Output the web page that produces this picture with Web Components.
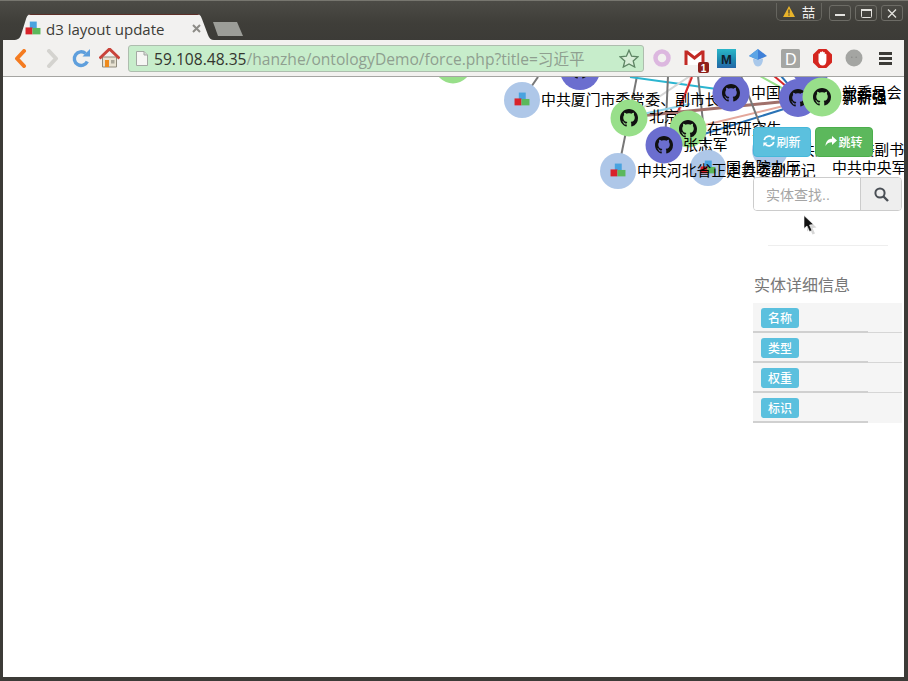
<!DOCTYPE html>
<html>
<head>
<meta charset="utf-8">
<title>d3 layout update</title>
<style>
  html, body { margin: 0; padding: 0; background: #3c3b37; overflow: hidden; }
</style>
</head>
<body>
<browser-window>
  <graph-canvas></graph-canvas>
  <side-panel></side-panel>
  <mouse-cursor></mouse-cursor>
</browser-window>

<script>
const CUBES = `
  <rect x="4.5" y="0.5" width="6.5" height="6.5" fill="#4aa3df"/>
  <rect x="0.5" y="6" width="6.5" height="6.5" fill="#d8232a"/>
  <rect x="7" y="6.5" width="7.5" height="6" fill="#5cb85c"/>`;

class WindowControls extends HTMLElement {
  constructor() {
    super();
    this.attachShadow({ mode: 'open' });
    this.shadowRoot.innerHTML = `
      <style>
        :host { display: flex; align-items: flex-start; padding: 2px 5px 0 0; }
        .user {
          width: 46px; height: 18px; box-sizing: border-box; margin-right: 3px;
          border: 1px solid #66655f; border-top: 0; border-radius: 0 0 5px 5px;
          display: flex; align-items: center; justify-content: center; gap: 7px;
          color: #f2f1ef; font: 13px "Noto Sans CJK SC", sans-serif;
        }
        .btn {
          width: 22px; height: 16px; box-sizing: border-box; margin-left: 4px; margin-top: 2px;
          border: 1px solid #6d6c66; border-radius: 3px;
          display: flex; align-items: center; justify-content: center;
        }
      </style>
      <div class="user">
        <svg width="12" height="11" viewBox="0 0 12 11"><path d="M6 0L12 11H0z" fill="#e8b32a"/><rect x="5.4" y="3.5" width="1.2" height="4" fill="#3c3b37"/><rect x="5.4" y="8.4" width="1.2" height="1.2" fill="#3c3b37"/></svg>
        <span>喆</span>
      </div>
      <div class="btn"><svg width="10" height="8"><rect x="0" y="5" width="10" height="2" fill="#e4e3df"/></svg></div>
      <div class="btn"><svg width="11" height="9"><rect x="0.5" y="0.5" width="10" height="8" rx="1" fill="none" stroke="#e4e3df"/><rect x="0" y="0" width="11" height="2" fill="#e4e3df"/></svg></div>
      <div class="btn"><svg width="10" height="9"><path d="M1 0.5L9 8.5M9 0.5L1 8.5" stroke="#e4e3df" stroke-width="1.3"/></svg></div>`;
  }
}
customElements.define('window-controls', WindowControls);

class BrowserTab extends HTMLElement {
  constructor() {
    super();
    this.attachShadow({ mode: 'open' });
    this.shadowRoot.innerHTML = `
      <style>
        :host {
          display: flex; align-items: center; width: 201px; height: 26px; box-sizing: border-box;
          padding: 2px 0 0 12px; background: #f2f1f0; color: #3c3b37;
          border-top: 1px solid #5c2e28;
          clip-path: path('M0 26C5 26 7 24 8 21L13 5C14 2 15 0 19 0L183 0C187 0 188 2 189 5L195 21C196 24 198 26 201 26Z');
          font: 15px "Open Sans", sans-serif;
        }
        svg.fav { flex: none; margin-right: 5px; }
        .title { flex: 1; white-space: nowrap; }
        svg.close { flex: none; margin-right: 13px; }
      </style>
      <svg class="fav" width="16" height="15" viewBox="0 0 15 14">${CUBES}</svg>
      <span class="title">d3 layout update</span>
      <svg class="close" width="9" height="9"><path d="M1 1L8 8M8 1L1 8" stroke="#8d8c88" stroke-width="2"/></svg>`;
  }
}
customElements.define('browser-tab', BrowserTab);

class NewTabButton extends HTMLElement {
  constructor() {
    super();
    this.attachShadow({ mode: 'open' });
    this.shadowRoot.innerHTML = `
      <style>
        :host {
          display: block; width: 30px; height: 14px; margin: 0 0 4px -1px; background: #9c9d98;
          clip-path: polygon(0 0, 24px 0, 30px 14px, 5px 14px);
        }
      </style>`;
  }
}
customElements.define('new-tab-button', NewTabButton);

class TitleBar extends HTMLElement {
  constructor() {
    super();
    this.attachShadow({ mode: 'open' });
    this.shadowRoot.innerHTML = `
      <style>
        :host {
          display: flex; justify-content: space-between; align-items: flex-start; height: 40px; box-sizing: border-box;
          border-top: 1px solid #77766f;
          background: linear-gradient(#4c4b46, #3f3e39 22px, #3c3b37);
        }
        .tabs { display: flex; align-items: flex-end; height: 39px; padding-left: 13px; }
      </style>
      <div class="tabs"><browser-tab></browser-tab><new-tab-button></new-tab-button></div>
      <window-controls></window-controls>`;
  }
}
customElements.define('title-bar', TitleBar);

class OmniBox extends HTMLElement {
  constructor() {
    super();
    this.attachShadow({ mode: 'open' });
    this.shadowRoot.innerHTML = `
      <style>
        :host {
          display: flex; align-items: center; flex: none; width: 516px; height: 27px; box-sizing: border-box;
          margin-left: 4px; padding: 0 4px 0 7px; background: #c7edcb;
          border: 1px solid #aebdae; border-radius: 3px; white-space: nowrap;
          font: 15.6px "Open Sans", "Noto Sans CJK SC", sans-serif; color: #8f9f90;
        }
        svg.doc { flex: none; margin-right: 6px; }
        .host { color: #34352f; font-weight: 500; }
        .url { flex: 1; overflow: hidden; }
      </style>
      <svg class="doc" width="12" height="15" viewBox="0 0 12 15"><path d="M0.5 0.5H8L11.5 4V14.5H0.5Z" fill="#f6f6f4" stroke="#a3a9a3"/><path d="M8 0.5V4H11.5" fill="#d8d8d6" stroke="#a3a9a3"/></svg>
      <span class="url"><span class="host">59.108.48.35</span>/hanzhe/ontologyDemo/force.php?title=习近平</span>
      <svg width="20" height="19" viewBox="0 0 20 19"><path d="M10 1.2L12.6 7.2L19 7.8L14.2 12L15.7 18L10 14.9L4.3 18L5.8 12L1 7.8L7.4 7.2Z" fill="#d9eed9" stroke="#5d8463" stroke-width="1.3"/></svg>`;
  }
}
customElements.define('omni-box', OmniBox);

class ToolSlot extends HTMLElement {
  constructor() {
    super();
    this.attachShadow({ mode: 'open' });
    this.shadowRoot.innerHTML = `
      <style>
        :host { display: flex; align-items: center; justify-content: center; flex: none; height: 36px; width: var(--w, 32px); }
      </style>
      <slot></slot>`;
  }
}
customElements.define('tool-slot', ToolSlot);

class ToolBar extends HTMLElement {
  constructor() {
    super();
    this.attachShadow({ mode: 'open' });
    this.shadowRoot.innerHTML = `
      <style>
        :host {
          display: flex; align-items: center; height: 36px; padding: 0 2px 0 1px;
          background: #f2f1ef; border-bottom: 1px solid #a5a5a2;
        }
        .ext { margin-left: 2px; display: flex; }
      </style>
      <tool-slot><svg width="13" height="19" viewBox="0 0 13 19"><path d="M10 2L3 9.5L10 17" fill="none" stroke="#f47b20" stroke-width="4" stroke-linecap="round" stroke-linejoin="round"/></svg></tool-slot>
      <tool-slot><svg width="13" height="19" viewBox="0 0 13 19"><path d="M3 2L10 9.5L3 17" fill="none" stroke="#d4d3cf" stroke-width="4" stroke-linecap="round" stroke-linejoin="round"/></svg></tool-slot>
      <tool-slot style="--w:26px"><svg width="19" height="19" viewBox="0 0 19 19"><path d="M15.3 12.5A6.8 6.8 0 1 1 13.6 4.5" fill="none" stroke="#5f9fdc" stroke-width="3.4"/><path d="M10.5 7.5H18V0Z" fill="#5f9fdc"/></svg></tool-slot>
      <tool-slot style="--w:30px"><svg width="21" height="20" viewBox="0 0 21 20"><path d="M3.5 9H17.5V19H3.5Z" fill="#e8e2d2" stroke="#8f8a7c"/><rect x="6" y="12" width="4" height="7" fill="#ee8a1d"/><rect x="12" y="12" width="3.5" height="3.5" fill="#a9a699"/><path d="M0.5 10.5L10.5 1L20.5 10.5" fill="none" stroke="#c9433a" stroke-width="3"/></svg></tool-slot>
      <omni-box></omni-box>
      <div class="ext">
        <tool-slot><svg width="18" height="18"><circle cx="9" cy="9" r="6.5" fill="none" stroke="#dcb7df" stroke-width="4.5"/></svg></tool-slot>
        <tool-slot><svg width="30" height="30" viewBox="0 0 30 30">
          <rect x="6" y="8" width="19" height="14" fill="#fff"/>
          <path d="M7 22V9H8L15.5 15L23 9H24V22" fill="none" stroke="#c22a25" stroke-width="3"/>
          <rect x="19" y="19" width="11" height="11" rx="2" fill="#8d1f1b"/>
          <text x="24.5" y="28.5" text-anchor="middle" font-family="Liberation Sans" font-weight="700" font-size="10" fill="#fff">1</text>
        </svg></tool-slot>
        <tool-slot><svg width="19" height="19" viewBox="0 0 19 19">
          <defs><linearGradient id="mg" x1="0" y1="0" x2="0" y2="1"><stop offset="0" stop-color="#2bb6c9"/><stop offset=".55" stop-color="#1f8ab0"/><stop offset="1" stop-color="#2467a8"/></linearGradient></defs>
          <rect width="19" height="19" fill="url(#mg)"/>
          <text x="9.5" y="15" text-anchor="middle" font-family="Liberation Sans" font-weight="700" font-size="13" fill="#10202e">M</text>
        </svg></tool-slot>
        <tool-slot><svg width="18" height="18" viewBox="0 0 18 18"><path d="M9 0L18 7L9 11L0 7Z" fill="#3f80d8"/><path d="M0 7L9 0V11Z" fill="#5da5e5"/><path d="M4 9.5L9 11L14 9.5C14 14 12 17.5 9 17.5C6 17.5 4 14 4 9.5Z" fill="#a9c8ea"/></svg></tool-slot>
        <tool-slot><svg width="19" height="19" viewBox="0 0 19 19"><rect width="19" height="19" rx="1.5" fill="#a5a6a3"/><text x="9.8" y="15.5" text-anchor="middle" font-family="Liberation Sans" font-size="16" fill="#fff">D</text></svg></tool-slot>
        <tool-slot><svg width="19" height="19" viewBox="0 0 19 19"><path d="M5.6 0H13.4L19 5.6V13.4L13.4 19H5.6L0 13.4V5.6Z" fill="#d5261f"/><path d="M5.5 8V5C5.5 4 7 4 7 5V3.5C7 2.5 8.6 2.5 8.6 3.5V3C8.6 2 10.2 2 10.2 3V3.6C10.2 2.7 11.8 2.7 11.8 3.6V5.4C11.8 4.6 13.4 4.6 13.4 5.4V11.5C13.4 14.5 12 16.5 9.5 16.5C7.5 16.5 6.5 15.5 5.5 13Z" fill="#fff"/></svg></tool-slot>
        <tool-slot><svg width="18" height="18"><circle cx="9" cy="9" r="8.5" fill="#a4a5a2"/><circle cx="6.8" cy="8.2" r=".8" fill="#8a8b88"/><circle cx="11.2" cy="8.2" r=".8" fill="#8a8b88"/></svg></tool-slot>
        <tool-slot><svg width="14" height="13"><rect width="13" height="3" y="0" fill="#3c3b37"/><rect width="13" height="3" y="5" fill="#3c3b37"/><rect width="13" height="3" y="10" fill="#3c3b37"/></svg></tool-slot>
      </div>`;
  }
}
customElements.define('tool-bar', ToolBar);

class BrowserWindow extends HTMLElement {
  constructor() {
    super();
    this.attachShadow({ mode: 'open' });
    this.shadowRoot.innerHTML = `
      <style>
        :host {
          display: flex; flex-direction: column; width: 908px; height: 681px; box-sizing: border-box;
          background: #3c3b37;
        }
        .body { display: flex; flex-direction: column; flex: 1; padding: 0 4px 4px 3px; min-height: 0; }
        .page { position: relative; flex: 1; background: #fff; overflow: hidden; }
      </style>
      <title-bar></title-bar>
      <div class="body">
        <tool-bar></tool-bar>
        <div class="page"><slot></slot></div>
      </div>`;
  }
}
customElements.define('browser-window', BrowserWindow);

class GraphCanvas extends HTMLElement {
  constructor() {
    super();
    this.attachShadow({ mode: 'open' });
    this.links = [
      [538, 77, 522, 100, '#777', 2],
      [637, 76, 629, 117, '#777', 2],
      [618, 171, 629, 117, '#777', 2],
      [630, 77, 731, 91, '#2cb5d0', 2],
      [690, 76, 629, 117, '#d6d6d6', 2],
      [668, 76, 665, 144, '#777', 2],
      [698, 76, 708, 168, '#777', 2],
      [691, 76, 679, 113, '#f7b6b2', 2],
      [692, 77, 677, 114, '#d62728', 2],
      [629, 117, 800, 100, '#a0706a', 3],
      [688, 129, 800, 102, '#e4a89c', 2],
      [688, 139, 800, 104, '#2a72b5', 2],
      [629, 117, 690, 104, '#8fd3ea', 2],
      [741, 76, 770, 150, '#777', 2],
      [760, 76, 800, 98, '#98df8a', 2],
      [774, 76, 800, 98, '#d62728', 2],
      [781, 76, 800, 98, '#2a72b5', 2]
    ];
    // type: a = cubes (light blue), g = green, p = purple
    this.nodes = [
      [453, 65, 18.5, 'g', '', 0, 0],
      [580, 70, 20, 'p', '', 0, 0],
      [522, 100, 18, 'a', '中共厦门市委常委、副市长', 541, 105],
      [731, 93, 18.5, 'p', '中国', 751, 98],
      [629, 118, 18.5, 'g', '北京', 649, 122],
      [770, 150, 18, 'a', '中共天津市委副书记', 785, 155],
      [688, 129, 18.5, 'g', '在职研究生', 707, 134],
      [664, 145, 18.5, 'p', '张志军', 683, 150],
      [708, 168, 18, 'a', '国务院办厅', 726, 173],
      [618, 171, 18, 'a', '中共河北省正定县委副书记', 637, 176],
      [811, 66, 20, 'p', '常委员会', 842, 98],
      [798, 98, 19, 'p', '郭新强', 842, 102],
      [822, 97, 19.5, 'g', '郝新强', 842, 103],
      [0, 0, 0, '', '中共中央军委', 832, 173]
    ];
  }

  connectedCallback() {
    const fills = { a: '#aec7e8', g: '#98df8a', p: '#6b6ecf' };
    const lines = this.links.map(l =>
      `<line x1="${l[0]}" y1="${l[1]}" x2="${l[2]}" y2="${l[3]}" stroke="${l[4]}" stroke-width="${l[5]}"/>`).join('');
    const nodes = this.nodes.map(n => {
      let out = '';
      if (n[2]) {
        out += `<circle cx="${n[0]}" cy="${n[1]}" r="${n[2]}" fill="${fills[n[3]]}"/>`;
        if (n[3] === 'a') out += `<use href="#cubes" x="${n[0] - 8}" y="${n[1] - 8}" width="16" height="15"/>`;
        else out += `<use href="#cat" x="${n[0] - 9}" y="${n[1] - 9}" width="18" height="18"/>`;
      }
      if (n[4]) out += `<text x="${n[5]}" y="${n[6]}">${n[4]}</text>`;
      return out;
    }).join('');
    this.shadowRoot.innerHTML = `
      <style>
        :host { display: block; position: absolute; inset: 0; }
        svg.g { display: block; }
        text { font: 14.9px "Liberation Sans", "Noto Sans CJK SC", sans-serif; fill: #000; }
      </style>
      <svg class="g" width="901" height="600" viewBox="3 77 901 600">
        <defs>
          <symbol id="cubes" viewBox="0 0 15 14">${CUBES}</symbol>
          <symbol id="cat" viewBox="0 0 16 16"><path fill="#111" d="M8 0C3.58 0 0 3.58 0 8c0 3.54 2.29 6.53 5.47 7.59.4.07.55-.17.55-.38 0-.19-.01-.82-.01-1.49-2.01.37-2.53-.49-2.69-.94-.09-.23-.48-.94-.82-1.13-.28-.15-.68-.52-.01-.53.63-.01 1.08.58 1.23.82.72 1.21 1.87.87 2.33.66.07-.52.28-.87.51-1.07-1.78-.2-3.64-.89-3.64-3.95 0-.87.31-1.59.82-2.15-.08-.2-.36-1.02.08-2.12 0 0 .67-.21 2.2.82.64-.18 1.32-.27 2-.27.68 0 1.36.09 2 .27 1.53-1.04 2.2-.82 2.2-.82.44 1.1.16 1.92.08 2.12.51.56.82 1.27.82 2.15 0 3.07-1.87 3.75-3.65 3.95.29.25.54.73.54 1.48 0 1.07-.01 1.93-.01 2.2 0 .21.15.46.55.38A8.013 8.013 0 0016 8c0-4.42-3.58-8-8-8z"/></symbol>
        </defs>
        ${lines}${nodes}
      </svg>`;
  }
}
customElements.define('graph-canvas', GraphCanvas);

class ActionButton extends HTMLElement {
  constructor() {
    super();
    this.attachShadow({ mode: 'open' });
    this.shadowRoot.innerHTML = `
      <style>
        :host {
          display: flex; align-items: center; justify-content: center; width: 58px; height: 30px; box-sizing: border-box;
          padding-bottom: 2px;
          background: var(--bg); border: 1px solid var(--bd); border-radius: 4px;
          color: #fff; font: 500 12px "Liberation Sans", "Noto Sans CJK SC", sans-serif;
        }
      </style>
      <slot></slot>`;
  }
}
customElements.define('action-button', ActionButton);

class DetailRow extends HTMLElement {
  constructor() {
    super();
    this.attachShadow({ mode: 'open' });
    this.shadowRoot.innerHTML = `
      <style>
        :host {
          display: block; height: 30px; box-sizing: border-box; padding: 5px 0 0 8px;
          background: #f5f5f5; position: relative;
          background-image: linear-gradient(#d6d6d6, #d6d6d6);
          background-repeat: no-repeat; background-size: 100% 1px; background-position: 0 29px;
        }
        :host(:last-child) { background-image: none; }
        .pill {
          display: flex; align-items: center; justify-content: center; width: 38px; height: 20px;
          box-sizing: border-box; padding-bottom: 2px;
          background: #5bc0de; border-radius: 3px;
          color: #fff; font: 500 12px "Liberation Sans", "Noto Sans CJK SC", sans-serif;
        }
        .rule { position: absolute; left: 0; top: 28px; width: 115px; height: 2px; background: #d0d0d0; }
      </style>
      <div class="pill"><slot></slot></div>
      <div class="rule"></div>`;
  }
}
customElements.define('detail-row', DetailRow);

class SidePanel extends HTMLElement {
  constructor() {
    super();
    this.attachShadow({ mode: 'open' });
    this.shadowRoot.innerHTML = `
      <style>
        :host {
          display: block; position: absolute; left: 750px; top: 50px; width: 149px;
          font-family: "Liberation Sans", "Noto Sans CJK SC", sans-serif;
        }
        .actions { display: flex; gap: 4px; }
        .info { --bg: #5bc0de; --bd: #46b8da; }
        .go { --bg: #5cb85c; --bd: #4cae4c; }
        svg.ico { margin-right: 1px; }
        .search {
          display: flex; height: 34px; margin-top: 20px; box-sizing: border-box;
          border: 1px solid #ccc; border-radius: 4px; overflow: hidden;
        }
        .input { flex: 1; display: flex; align-items: center; padding-left: 12px; background: #fff; color: #a5a5a5; font-size: 14px; }
        .addon { width: 40px; display: flex; align-items: center; justify-content: center; background: #eee; border-left: 1px solid #ccc; }
        hr { width: 120px; height: 1px; margin: 34px 0 0 15px; border: 0; background: #eee; }
        h4 { margin: 30px 0 0 1px; height: 27px; font-size: 16px; font-weight: 400; line-height: 20px; color: #777; }
      </style>
      <div class="actions">
        <action-button class="info"><svg class="ico" width="12" height="12" viewBox="0 0 12 12"><path d="M1.2 5A5 5 0 0 1 9.6 2.6M10.8 7A5 5 0 0 1 2.4 9.4" fill="none" stroke="#fff" stroke-width="1.7"/><path d="M7.5 4.6H11.6V.5ZM4.5 7.4H.4V11.5Z" fill="#fff"/></svg>刷新</action-button>
        <action-button class="go"><svg class="ico" width="12" height="11" viewBox="0 0 12 11"><path d="M7 0L12 4.5L7 9V6.2C4 6.2 2 7 0.5 10C0.8 5.5 3 2.8 7 2.8Z" fill="#fff"/></svg>跳转</action-button>
      </div>
      <div class="search">
        <div class="input">实体查找..</div>
        <div class="addon"><svg width="15" height="15" viewBox="0 0 15 15"><circle cx="6" cy="6" r="4.6" fill="none" stroke="#4a4f55" stroke-width="2"/><path d="M9.5 9.5L14 14" stroke="#4a4f55" stroke-width="2.4"/></svg></div>
      </div>
      <hr>
      <h4>实体详细信息</h4>
      <div class="rows">
        <detail-row>名称</detail-row>
        <detail-row>类型</detail-row>
        <detail-row>权重</detail-row>
        <detail-row>标识</detail-row>
      </div>`;
  }
}
customElements.define('side-panel', SidePanel);

class MouseCursor extends HTMLElement {
  constructor() {
    super();
    this.attachShadow({ mode: 'open' });
    this.shadowRoot.innerHTML = `
      <style>
        :host { display: block; position: absolute; left: 800px; top: 138px; width: 14px; height: 20px; }
        svg { display: block; overflow: visible; }
      </style>
      <svg width="14" height="20" viewBox="0 0 14 20">
        <path d="M2.5 2L2.5 15L5.5 12.5L8 18L10.5 17L8 11.5L12 11Z" fill="#bbb" opacity=".6" transform="translate(1.5 1.5)"/>
        <path d="M1 0.5L1 13.5L4 11L6.5 16.5L9 15.5L6.5 10L10.5 9.5Z" fill="#111" stroke="#fff" stroke-width=".6"/>
      </svg>`;
  }
}
customElements.define('mouse-cursor', MouseCursor);
</script>
</body>
</html>
